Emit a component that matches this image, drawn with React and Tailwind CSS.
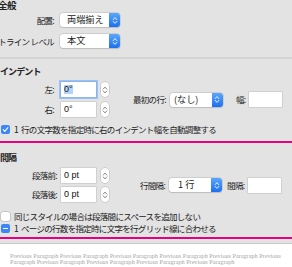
import React from "react";

function Chevrons({ color = "white", w = 6, h = 9 }) {
  return (
    <svg width={w} height={h} viewBox="0 0 6 9">
      <path d="M1.2 3.6 L3 1.6 L4.8 3.6 M1.2 5.4 L3 7.4 L4.8 5.4" stroke={color} strokeWidth="0.9" fill="none" strokeLinecap="round" strokeLinejoin="round" />
    </svg>
  );
}

function Select({ widthCls, children, textCls }) {
  return (
    <div className={`flex h-[14px] ${widthCls} rounded-[3px] bg-white shadow-[0_0_0_0.5px_#b9b9b9,0_0.5px_1px_rgba(0,0,0,0.15)] overflow-hidden`}>
      <div className={`flex-1 flex items-center ${textCls} text-[9.2px] leading-none text-[#222]`}>{children}</div>
      <div className="w-[11px] h-full flex items-center justify-center bg-gradient-to-b from-[#5aa6fb] to-[#1b6ff0]">
        <Chevrons />
      </div>
    </div>
  );
}

function Stepper() {
  return (
    <div className="w-[8px] h-[15px] rounded-[4px] bg-white shadow-[0_0_0_0.5px_#b5b5b5] flex items-center justify-center">
      <Chevrons color="#777" w={6} h={10} />
    </div>
  );
}

function Input({ widthCls, children, focused }) {
  return (
    <div className={`${widthCls} h-[15px] bg-white flex items-center pl-[3px] text-[9px] leading-none text-[#111] font-['Liberation_Sans',sans-serif] ${focused ? "shadow-[0_0_0_0.5px_#7aa7e6,0_0_0_2px_#9dc1f2]" : "shadow-[0_0_0_0.5px_#bdbdbd]"}`}>
      {children}
    </div>
  );
}

function Check({ kind }) {
  if (kind === "checked") {
    return (
      <div className="w-[9px] h-[9px] rounded-[2px] bg-[#3d86f5] flex items-center justify-center shrink-0">
        <svg width="7" height="7" viewBox="0 0 7 7">
          <path d="M1.2 3.7 L2.8 5.3 L5.9 1.6" stroke="white" strokeWidth="1.1" fill="none" strokeLinecap="round" strokeLinejoin="round" />
        </svg>
      </div>
    );
  }
  if (kind === "mixed") {
    return (
      <div className="w-[9px] h-[9px] rounded-[2px] bg-[#3d86f5] flex items-center justify-center shrink-0">
        <div className="w-[5px] h-[1.2px] bg-white" />
      </div>
    );
  }
  return <div className="w-[9px] h-[9px] rounded-[2px] bg-white shadow-[0_0_0_0.5px_#a9a9a9] shrink-0" />;
}

const label = "text-[8.5px] tracking-[-0.7px] leading-none text-[#222] whitespace-nowrap";

export default function App() {
  const preview = Array.from({ length: 10 }, () => "Previous Paragraph").join(" ");
  return (
    <div className="w-[292px] h-[267px] overflow-hidden bg-[#e3e3e3] flex flex-col font-['Noto_Sans_CJK_JP',sans-serif]">
      {/* 全般 */}
      <div className="h-[10px] leading-[10px] text-[9.5px] font-bold text-[#222] ml-[-2px] tracking-[-0.6px]">全般</div>
      <div className="mt-[3px] flex items-center h-[14px]">
        <div className={`w-[54px] flex justify-end ${label}`}>配置:</div>
        <div className="ml-[6px]">
          <Select widthCls="w-[60px]" textCls="pl-[7px] tracking-[0px]">両端揃え</Select>
        </div>
      </div>
      <div className="mt-[7px] flex items-center h-[14px]">
        <div className={`w-[54px] flex justify-end ${label}`}>アウトライン レベル</div>
        <div className="ml-[6px]">
          <Select widthCls="w-[60px]" textCls="pl-[7px]">本文</Select>
        </div>
      </div>
      <div className="mt-[9px] h-[2px] bg-[#d5d5d5]" />

      {/* インデント */}
      <div className="mt-[8px] h-[10px] leading-[10px] text-[9px] font-bold text-[#222] tracking-[-0.9px]">インデント</div>
      <div className="mt-[5px] flex items-center">
        <div className="flex flex-col gap-[5px]">
          <div className="flex items-center h-[15px]">
            <div className={`w-[54px] flex justify-end ${label}`}>左:</div>
            <div className="ml-[7px]">
              <Input widthCls="w-[35px]" focused>
                <span className="bg-[#b5d3fa]">0°</span>
              </Input>
            </div>
            <div className="ml-[5px]"><Stepper /></div>
          </div>
          <div className="flex items-center h-[15px]">
            <div className={`w-[54px] flex justify-end ${label}`}>右:</div>
            <div className="ml-[7px]">
              <Input widthCls="w-[35px]">0°</Input>
            </div>
            <div className="ml-[5px]"><Stepper /></div>
          </div>
        </div>
        <div className={`ml-[24px] ${label}`}>最初の行:</div>
        <div className="ml-[4px]">
          <Select widthCls="w-[53px]" textCls="pl-[4px]">(なし)</Select>
        </div>
        <div className={`ml-[13px] ${label}`}>幅:</div>
        <div className="ml-[4px]">
          <Input widthCls="w-[33px]" />
        </div>
      </div>
      <div className="mt-[7px] flex items-center h-[10px] pl-[1px]">
        <Check kind="checked" />
        <div className={`ml-[4px] ${label}`}>1<span className="ml-[3px]">行の文字数を指定時に右のインデント幅を自動調整する</span></div>
      </div>
      <div className="mt-[7px] h-[2px] bg-[#e4007f]" />

      {/* 間隔 */}
      <div className="mt-[10px] h-[10px] leading-[10px] text-[9px] font-bold text-[#222] tracking-[-0.9px]">間隔</div>
      <div className="mt-[5px] flex items-center">
        <div className="flex flex-col gap-[4px]">
          <div className="flex items-center h-[15px]">
            <div className={`w-[57px] flex justify-end ${label}`}>段落前:</div>
            <div className="ml-[4px]">
              <Input widthCls="w-[35px]">0 pt</Input>
            </div>
            <div className="ml-[5px]"><Stepper /></div>
          </div>
          <div className="flex items-center h-[15px]">
            <div className={`w-[57px] flex justify-end ${label}`}>段落後:</div>
            <div className="ml-[4px]">
              <Input widthCls="w-[35px]">0 pt</Input>
            </div>
            <div className="ml-[5px]"><Stepper /></div>
          </div>
        </div>
        <div className={`ml-[31px] ${label}`}>行間隔:</div>
        <div className="ml-[4px]">
          <Select widthCls="w-[53px]" textCls="pl-[9px]">1 行</Select>
        </div>
        <div className={`ml-[5px] ${label}`}>間隔:</div>
        <div className="ml-[4px]">
          <Input widthCls="w-[33px]" />
        </div>
      </div>
      <div className="mt-[10px] flex items-center h-[9px] pl-[1px]">
        <Check kind="none" />
        <div className={`ml-[4px] ${label}`}>同じスタイルの場合は段落間にスペースを追加しない</div>
      </div>
      <div className="mt-[3px] flex items-center h-[9px] pl-[1px]">
        <Check kind="mixed" />
        <div className={`ml-[4px] ${label}`}>1<span className="ml-[3px]">ページの行数を指定時に文字を行グリッド線に合わせる</span></div>
      </div>
      <div className="mt-[4px] h-[2px] bg-[#e4007f]" />
      <div className="mt-[4px] h-[1px] bg-[#c9c9c9]" />
      <div className="flex-1 bg-white pt-[9px] pl-[10px] pr-[3px]">
        <div className="text-[6.2px] leading-[6px] text-[#a8a8a8] font-['Liberation_Serif',serif]">{preview}</div>
      </div>
    </div>
  );
}
